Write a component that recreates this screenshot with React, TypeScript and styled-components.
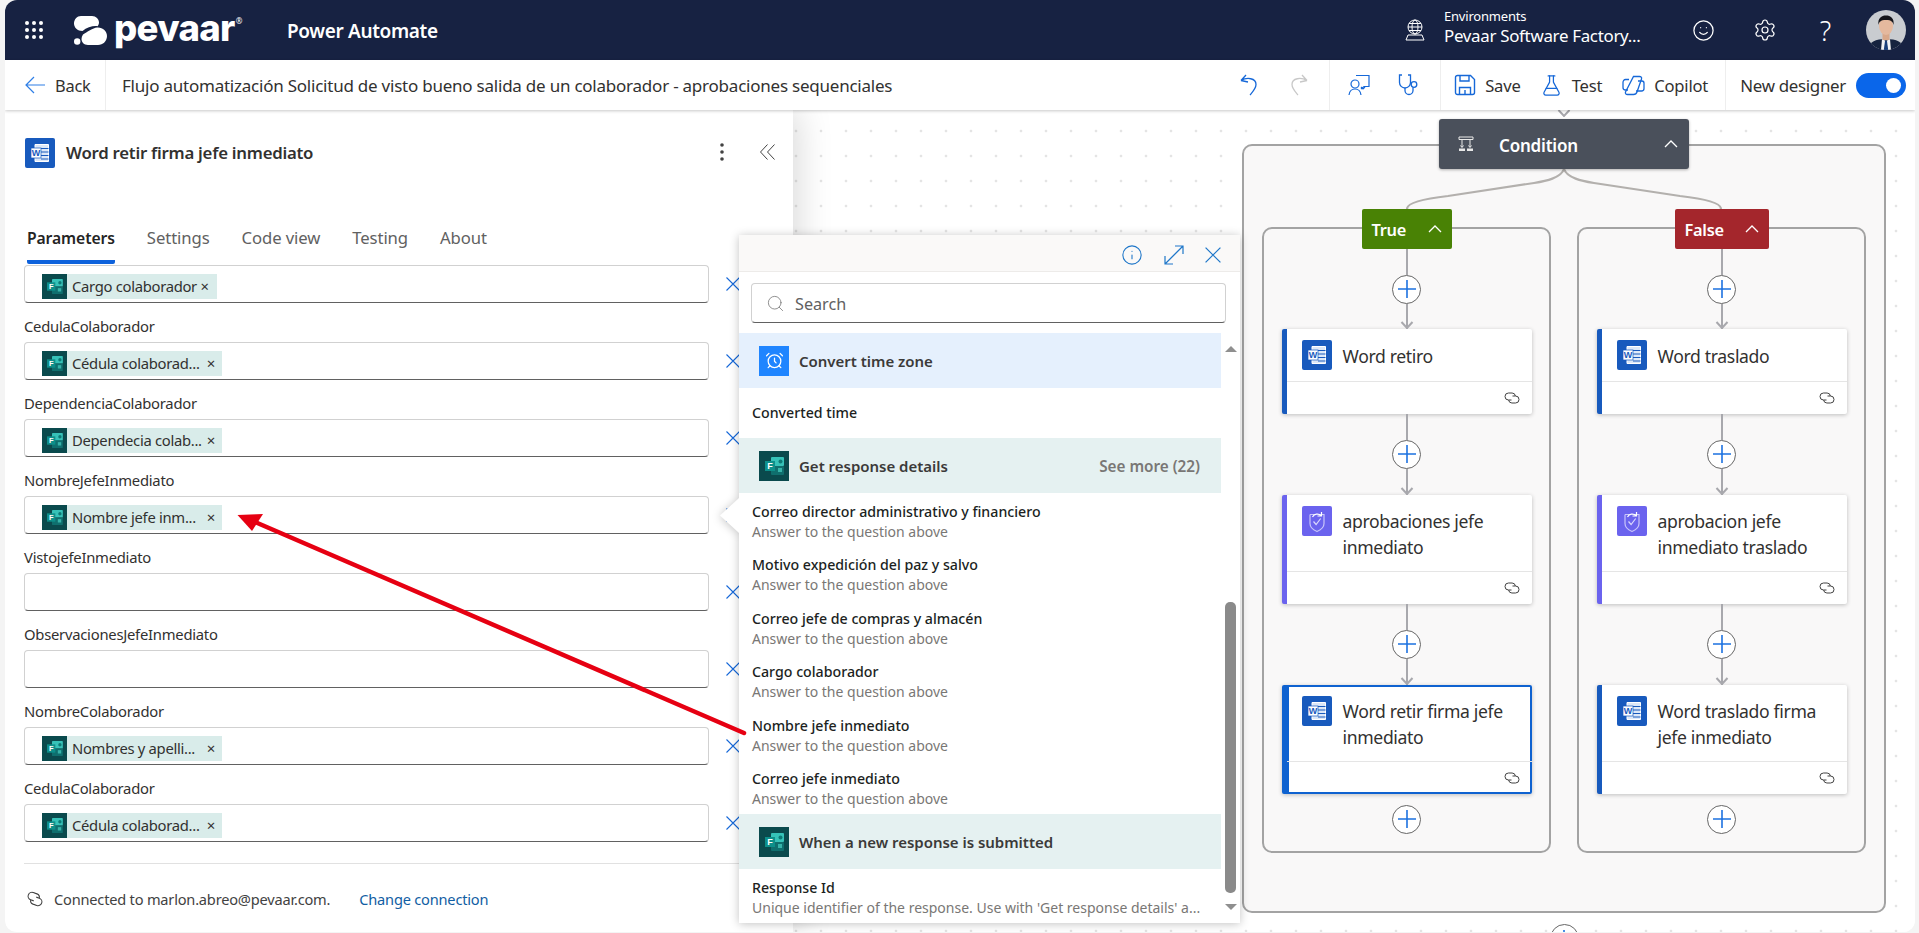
import React from "react";
import styled, { createGlobalStyle } from "styled-components";
import { AlarmClock, FlaskConical, Info, Search, Settings, Smile } from "lucide-react";

const FONT = `"Noto Sans", "Open Sans", Roboto, sans-serif`;
const BLUE = "#1668d8";
const TEXT = "#323130";

const Global = createGlobalStyle`
  html, body { margin: 0; padding: 0; background: #f4f4f4; overflow: hidden; }
  * { box-sizing: border-box; }
  #root { width: 1919px; height: 933px; }
`;

const Window = styled.div`
  position: relative;
  margin-left: 5px;
  width: 1910px;
  height: 932px;
  border-radius: 12px;
  overflow: hidden;
  display: flex;
  flex-direction: column;
  background: #fff;
  font-family: ${FONT};
  color: ${TEXT};
`;

/* ---------- top bar ---------- */
const Header = styled.header`
  height: 60px;
  flex: none;
  background: #172242;
  color: #fff;
  display: flex;
  align-items: center;
`;
const Waffle = styled.div`
  display: grid;
  grid-template-columns: repeat(3, 4px);
  grid-auto-rows: 4px;
  gap: 3px;
  margin-left: 20px;
  i { background: #fff; border-radius: 50%; }
`;
const Logo = styled.div`
  display: flex;
  align-items: center;
  margin-left: 31px;
  width: 170px;
`;
const LogoWord = styled.span`
  font-family: Inter, ${FONT};
  font-weight: 800;
  font-size: 36.5px;
  line-height: 42px;
  letter-spacing: -0.7px;
  margin-left: 7px;
  margin-top: -4px;
`;
const LogoMark = styled.sup`
  font-size: 8px;
  line-height: 8px;
  margin-top: -18px;
  margin-left: 1px;
`;
const AppName = styled.div`
  margin-left: 43px;
  margin-top: 2px;
  font-size: 19px;
  font-weight: 600;
  letter-spacing: -0.35px;
`;
const HeaderRight = styled.div`
  margin-left: auto;
  display: flex;
  align-items: center;
  height: 100%;
`;
const EnvBlock = styled.div`
  margin-left: 18px;
  width: 229px;
  display: flex;
  flex-direction: column;
`;
const EnvLabel = styled.span`
  font-size: 13px;
  line-height: 16px;
  margin-top: -5px;
  letter-spacing: -0.2px;
`;
const EnvName = styled.span`
  font-size: 16.9px;
  line-height: 22px;
  margin-top: 1px;
  letter-spacing: -0.3px;
`;
const HeaderIcon = styled.span`
  width: 61px;
  display: flex;
  justify-content: center;
  align-items: center;
  font-size: 27px;
  font-weight: 300;
`;
const Avatar = styled.div`
  width: 40px;
  height: 40px;
  border-radius: 50%;
  overflow: hidden;
  margin: 0 9px 0 10px;
  svg { display: block; }
`;

/* ---------- toolbar ---------- */
const Toolbar = styled.div`
  height: 50px;
  flex: none;
  background: #fff;
  display: flex;
  align-items: center;
  box-shadow: 0 1px 3px rgba(0, 0, 0, 0.22);
  position: relative;
  z-index: 5;
`;
const BackBtn = styled.div`
  width: 101px;
  height: 100%;
  border-right: 1px solid #eeeeee;
  display: flex;
  align-items: center;
  gap: 10px;
  padding-left: 20px;
  font-size: 16.4px;
  letter-spacing: -0.2px;
`;
const FlowTitle = styled.div`
  flex: 1;
  padding-left: 16px;
  font-size: 17px;
  letter-spacing: -0.23px;
  white-space: nowrap;
`;
const ToolGroup = styled.div<{ $w?: number; $gap?: number; $pad?: string; $ml?: number }>`
  height: 100%;
  display: flex;
  align-items: center;
  ${(p) => (p.$w ? `width: ${p.$w}px;` : "")}
  gap: ${(p) => p.$gap ?? 0}px;
  padding: ${(p) => p.$pad ?? "0"};
  margin-left: ${(p) => p.$ml ?? 0}px;
  border-left: 1px solid #eeeeee;
`;
const PlainGroup = styled(ToolGroup)`
  border-left: none;
`;
const IconBtn = styled.span`
  width: 50px;
  display: flex;
  justify-content: center;
`;
const Action = styled.span<{ $ml?: number }>`
  display: flex;
  align-items: center;
  gap: 9px;
  font-size: 16.6px;
  letter-spacing: -0.2px;
  margin-left: ${(p) => p.$ml ?? 0}px;
`;
const DesignerLabel = styled.span`
  font-size: 16.9px;
  letter-spacing: -0.3px;
  white-space: nowrap;
`;
const Toggle = styled.span`
  width: 50px;
  height: 25px;
  border-radius: 13px;
  background: #0a66ea;
  display: flex;
  justify-content: flex-end;
  align-items: center;
  padding-right: 5px;
  i { width: 15px; height: 15px; border-radius: 50%; background: #fff; }
`;
const GroupSpacer = styled.span`
  width: 6px;
`;

/* ---------- body ---------- */
const Body = styled.div`
  flex: 1;
  display: flex;
  min-height: 0;
`;
const Panel = styled.aside`
  width: 788px;
  flex: none;
  background: #fff;
  box-shadow: 4px 0 34px rgba(0, 0, 0, 0.16);
  padding-left: 19px;
  position: relative;
  z-index: 2;
  overflow: hidden;
`;
const PanelHead = styled.div`
  height: 105px;
  padding: 28px 0 0 1px;
  display: flex;
  align-items: flex-start;
`;
const PanelTitle = styled.div`
  margin-left: 11px;
  margin-top: 3px;
  font-size: 16.8px;
  line-height: 24px;
  font-weight: 600;
  letter-spacing: -0.25px;
  flex: 1;
`;
const PanelTools = styled.div`
  display: flex;
  align-items: center;
  gap: 36px;
  margin: 5px 18px 0 0;
`;
const Tabs = styled.div`
  height: 50px;
  display: flex;
  gap: 32px;
  padding-left: 3px;
`;
const Tab = styled.div<{ $on?: boolean }>`
  height: 49px;
  padding-top: 13px;
  font-size: ${(p) => (p.$on ? 15.7 : 16.7)}px;
  line-height: 20px;
  letter-spacing: -0.1px;
  color: ${(p) => (p.$on ? "#242424" : "#616161")};
  font-weight: ${(p) => (p.$on ? 600 : 400)};
  border-bottom: 4px solid ${(p) => (p.$on ? "#0e62dc" : "transparent")};
  border-radius: 0 0 2px 2px;
`;
const Label = styled.div`
  height: 39px;
  padding-top: 13px;
  font-size: 14.8px;
  line-height: 20px;
  letter-spacing: -0.25px;
`;
const FieldRow = styled.div`
  display: flex;
  align-items: center;
  gap: 17px;
`;
const Input = styled.div`
  width: 685px;
  height: 38px;
  border: 1px solid #d1d1d1;
  border-bottom-color: #616161;
  border-radius: 4px;
  background: #fff;
  padding: 8px 0 0 17px;
`;
const Token = styled.span<{ $w: number }>`
  width: ${(p) => p.$w}px;
  height: 25px;
  display: flex;
  align-items: center;
  background: #d9ecea;
  font-size: 14.8px;
  letter-spacing: -0.3px;
  white-space: nowrap;
  position: relative;
`;
const TokenText = styled.span`
  margin: -2px 0 0 5px;
`;
const TokenClose = styled.span`
  position: absolute;
  right: 7px;
  top: 3px;
  font-size: 15px;
  line-height: 18px;
`;
const Divider = styled.div`
  width: 720px;
  height: 1px;
  background: #e1e1e1;
  margin-top: 21px;
`;
const Connection = styled.div`
  margin-top: 25px;
  display: flex;
  align-items: center;
  font-size: 14.6px;
  line-height: 20px;
  letter-spacing: -0.2px;
  padding-left: 3px;
`;
const ConnIcon = styled.span`
  display: block;
  line-height: 0;
  transform: rotate(20deg) scale(1.1);
`;
const ConnText = styled.span`
  margin-left: 11px;
  color: #424242;
`;
const ConnLink = styled.span`
  margin-left: 29px;
  color: #115ea3;
`;

/* ---------- canvas ---------- */
const Canvas = styled.main`
  flex: 1;
  position: relative;
  overflow: hidden;
  background-color: #fff;
  background-image: radial-gradient(circle, #bdbdbd 0.8px, transparent 1.1px);
  background-size: 25px 25px;
  background-position: -9.5px 8.5px;
`;
const FlowWrap = styled.div`
  position: absolute;
  left: 449px;
  top: 34px;
  width: 644px;
  display: flex;
  flex-direction: column;
  align-items: center;
`;
const Group = styled.section`
  width: 644px;
  height: 769px;
  border: 2px solid #a3a3a3;
  border-radius: 10px;
  background: #f9f8f8;
  display: flex;
  flex-direction: column;
  align-items: center;
`;
const ConditionNode = styled.div`
  width: 250px;
  height: 50px;
  flex: none;
  margin-top: -27px;
  background: #4a505b;
  color: #fff;
  border-radius: 3px;
  box-shadow: 0 1px 3px rgba(0, 0, 0, 0.3);
  display: flex;
  align-items: center;
  padding: 0 11px 0 19px;
  font-size: 17px;
  font-weight: 600;
  position: relative;
`;
const ConditionName = styled.span`
  margin: 2px 0 0 25px;
  flex: 1;
  letter-spacing: -0.2px;
`;
const TopArrow = styled.span`
  position: absolute;
  left: 118px;
  top: -10px;
  line-height: 0;
`;
const BranchLinks = styled.svg`
  flex: none;
  display: block;
`;
const Branches = styled.div`
  display: flex;
  gap: 26px;
  padding-top: 18px;
`;
const Branch = styled.div`
  width: 289px;
  height: 626px;
  border: 2px solid #a3a3a3;
  border-radius: 10px;
  display: flex;
  flex-direction: column;
  align-items: center;
`;
const BranchHead = styled.div<{ $bg: string; $w: number }>`
  width: ${(p) => p.$w}px;
  height: 40px;
  flex: none;
  margin-top: -20px;
  background: ${(p) => p.$bg};
  color: #fff;
  border-radius: 2px;
  display: flex;
  align-items: center;
  justify-content: space-between;
  padding: 0 10px;
  font-size: 16.4px;
  font-weight: 600;
  letter-spacing: -0.3px;
`;
const Edge = styled.div<{ $h: number }>`
  height: ${(p) => p.$h}px;
  flex: none;
  display: flex;
  flex-direction: column;
  align-items: center;
`;
const EdgeLine = styled.div`
  flex: 1;
  width: 2px;
  background: #a8a8ad;
  position: relative;
`;
const ArrowHead = styled.span`
  position: absolute;
  left: -6px;
  bottom: 0;
  line-height: 0;
`;
const PlusBtn = styled.span`
  width: 29px;
  height: 29px;
  flex: none;
  border-radius: 50%;
  background: #fff;
  border: 1px solid #666;
  display: flex;
  align-items: center;
  justify-content: center;
`;
const Card = styled.article<{ $accent: string; $selected?: boolean }>`
  width: 250px;
  flex: none;
  background: #fff;
  border-radius: 2px;
  box-shadow: ${(p) => (p.$selected ? "inset 0 0 0 2px #0f62d0, " : "")}0 1px 4px rgba(0, 0, 0, 0.24);
  border-left: 5px solid ${(p) => (p.$selected ? "#0f62d0" : p.$accent)};
`;
const CardHead = styled.div`
  display: flex;
  gap: 11px;
  padding: 11px 15px 10.5px 15px;
  border-bottom: 1px solid #e5e5e5;
`;
const CardTitle = styled.div`
  padding-top: 3.5px;
  font-size: 17.6px;
  line-height: 25.5px;
  letter-spacing: -0.35px;
  color: #323130;
`;
const CardFoot = styled.div`
  height: 32px;
  display: flex;
  align-items: center;
  justify-content: flex-end;
  padding-right: 12px;
`;
const TailPlus = styled(PlusBtn)`
  margin-top: 11px;
`;

/* ---------- picker ---------- */
const Popup = styled.div`
  position: absolute;
  left: 734px;
  top: 235px;
  width: 501px;
  height: 688px;
  background: #fff;
  filter: drop-shadow(0 1px 5px rgba(0, 0, 0, 0.24));
  display: flex;
  flex-direction: column;
  z-index: 8;
  &::before {
    content: "";
    position: absolute;
    left: -19px;
    top: 263px;
    width: 19px;
    height: 35px;
    background: #fff;
    clip-path: polygon(100% 0, 0 50%, 100% 100%);
  }
`;
const PopHead = styled.div`
  height: 37px;
  flex: none;
  background: #faf9f8;
  border-bottom: 1px solid #edebe9;
  display: flex;
  align-items: center;
  justify-content: flex-end;
  gap: 21px;
  padding-right: 19px;
  padding-top: 3px;
`;
const SearchWrap = styled.div`
  padding: 11px 14px 10px 12px;
  flex: none;
`;
const SearchBox = styled.div`
  height: 40px;
  border: 1px solid #d1d1d1;
  border-bottom-color: #616161;
  border-radius: 4px;
  display: flex;
  align-items: center;
  padding: 1px 0 0 14px;
  gap: 10px;
  color: #616161;
  font-size: 16.2px;
`;
const PopBody = styled.div`
  flex: 1;
  display: flex;
  min-height: 0;
`;
const List = styled.div`
  width: 482px;
  flex: none;
`;
const SectionHead = styled.div<{ $bg: string }>`
  height: 55px;
  background: ${(p) => p.$bg};
  display: flex;
  align-items: center;
  padding: 0 21px 0 20px;
  gap: 10px;
  font-size: 15px;
  font-weight: 600;
  color: #3b3a39;
  letter-spacing: -0.02px;
`;
const SeeMore = styled.span`
  margin-left: auto;
  font-weight: 600;
  font-size: 15.3px;
  color: #797775;
`;
const TimeBadge = styled.span`
  width: 30px;
  height: 30px;
  background: #1f85ff;
  display: flex;
  align-items: center;
  justify-content: center;
  color: #fff;
`;
const SimpleRow = styled.div`
  height: 50px;
  display: flex;
  align-items: center;
  padding: 0 0 2px 13px;
  font-size: 14.2px;
  font-weight: 500;
  color: #201f1e;
`;
const TokenRow = styled.div`
  height: 53.5px;
  padding: 8.5px 0 5px 13px;
`;
const RowTitle = styled.div`
  font-size: 14.2px;
  line-height: 20px;
  font-weight: 500;
  color: #201f1e;
  letter-spacing: 0;
  white-space: nowrap;
`;
const RowSub = styled.div`
  font-size: 14px;
  line-height: 20px;
  color: #797775;
  letter-spacing: 0;
  white-space: nowrap;
`;
const Scrollbar = styled.div`
  width: 19px;
  flex: none;
  padding-top: 13px;
  display: flex;
  flex-direction: column;
  align-items: center;
`;
const ScrollUp = styled.i`
  width: 0;
  height: 0;
  border-left: 6px solid transparent;
  border-right: 6px solid transparent;
  border-bottom: 6px solid #8f8f8f;
`;
const ScrollDown = styled.i`
  width: 0;
  height: 0;
  border-left: 6px solid transparent;
  border-right: 6px solid transparent;
  border-top: 6px solid #8f8f8f;
  margin-top: 11px;
`;
const Thumb = styled.div`
  width: 11px;
  height: 291px;
  margin-top: 250px;
  border-radius: 5px;
  background: #8a8a8a;
`;
const Annotation = styled.svg`
  position: absolute;
  left: 0;
  top: 0;
  z-index: 9;
  pointer-events: none;
`;
const Tile = styled.svg`
  flex: none;
  display: block;
`;

/* ---------- drawings ---------- */
const WordIcon = () => (
  <Tile width="30" height="30" viewBox="0 0 30 30">
    <rect width="30" height="30" rx="2" fill="#185abd" />
    <path d="M10 6.500h13.500v17H10z" fill="#dce8f8" stroke="#fff" />
    <path d="M16 10.500h7.500M16 14h7.500M16 17.500h7.500M16 21h7.500" stroke="#185abd" strokeWidth="1" />
    <rect x="6" y="10" width="10" height="10" fill="#fff" stroke="#185abd" strokeWidth=".7" />
    <text x="11" y="18.200" fontSize="9" fontWeight="700" fontFamily="Liberation Sans" textAnchor="middle" fill="#185abd">W</text>
  </Tile>
);
const FormsIcon = ({ size = 30 }: { size?: number }) => (
  <Tile width={size} height={size} viewBox="0 0 30 30">
    <rect width="30" height="30" fill="#0a4a4d" />
    <rect x="12" y="6" width="13" height="9" rx="1" fill="#36c2b8" />
    <circle cx="21.500" cy="10.500" r="2" fill="#0c7a75" />
    <rect x="12" y="15" width="13" height="9" rx="1" fill="#0f6f6e" />
    <rect x="19" y="17" width="4" height="4" fill="#37b3a9" />
    <rect x="6" y="10" width="10" height="10" fill="#0d8f8a" />
    <text x="11" y="18.200" fontSize="9" fontWeight="700" fontFamily="Liberation Sans" textAnchor="middle" fill="#fff">F</text>
  </Tile>
);
const ApprovalIcon = () => (
  <Tile width="30" height="30" viewBox="0 0 30 30">
    <rect width="30" height="30" rx="2" fill="#6b63ee" />
    <path d="M8 8.500h5M17 8.500h5v9c0 4-3.500 6.500-7 8-3.500-1.500-7-4-7-8v-9" fill="none" stroke="#c8c5fa" strokeWidth="1.200" />
    <path d="M11.500 15.500l2.600 3 4.600-6" fill="none" stroke="#d9d7fc" strokeWidth="1.200" />
    <path d="M10.500 11a5.500 5.500 0 0 1 8.500-1.500M19.500 6v4h-4" fill="none" stroke="#fff" strokeWidth="1.200" />
  </Tile>
);
const LinkIcon = ({ c = "#424242" }: { c?: string }) => (
  <Tile width="16" height="12" viewBox="0 0 16 12" fill="none" stroke={c} strokeWidth="1">
    <path d="M7.500 8H4.500a3.400 3.400 0 0 1 0-7h3.600a3.400 3.400 0 0 1 3.300 3" />
    <path d="M8.500 4h3a3.400 3.400 0 0 1 0 7H7.900a3.400 3.400 0 0 1-3.300-3" />
  </Tile>
);
const PlusGlyph = () => (
  <svg width="18" height="18" viewBox="0 0 18 18" stroke="#1d72e0" strokeWidth="1.600">
    <path d="M9 0v18M0 9h18" />
  </svg>
);
const XGlyph = ({ size = 14, c = BLUE }: { size?: number; c?: string }) => (
  <Tile width={size} height={size} viewBox="0 0 14 14" stroke={c} strokeWidth="1.100" fill="none">
    <path d="M.5.5l13 13M13.500.5l-13 13" />
  </Tile>
);
const Chevron = ({ c = "#fff" }: { c?: string }) => (
  <Tile width="14" height="8" viewBox="0 0 14 8" fill="none" stroke={c} strokeWidth="1.300">
    <path d="M1 7l6-6 6 6" />
  </Tile>
);
const Arrow = ({ c = "#a8a8ad" }: { c?: string }) => (
  <Tile width="14" height="8" viewBox="0 0 14 8" fill="none" stroke={c} strokeWidth="2">
    <path d="M1.500 1l5.500 6 5.500-6" />
  </Tile>
);

const FlowEdge = ({ h }: { h: number }) => (
  <Edge $h={h}>
    <EdgeLine />
    <PlusBtn>
      <PlusGlyph />
    </PlusBtn>
    <EdgeLine>
      <ArrowHead>
        <Arrow />
      </ArrowHead>
    </EdgeLine>
  </Edge>
);

const FlowCard = ({
  icon,
  accent,
  selected,
  lines,
}: {
  icon: React.ReactNode;
  accent: string;
  selected?: boolean;
  lines: string[];
}) => (
  <Card $accent={accent} $selected={selected}>
    <CardHead>
      {icon}
      <CardTitle>
        {lines.map((l) => (
          <div key={l}>{l}</div>
        ))}
      </CardTitle>
    </CardHead>
    <CardFoot>
      <LinkIcon />
    </CardFoot>
  </Card>
);

const FieldLine = ({ label, token }: { label?: string; token?: string }) => (
  <>
    {label && <Label>{label}</Label>}
    <FieldRow>
      <Input>
        {token && (
          <Token $w={180}>
            <FormsIcon size={25} />
            <TokenText>{token}</TokenText>
            <TokenClose>×</TokenClose>
          </Token>
        )}
      </Input>
      <XGlyph />
    </FieldRow>
  </>
);

const ANSWERS = [
  "Correo director administrativo y financiero",
  "Motivo expedición del paz y salvo",
  "Correo jefe de compras y almacén",
  "Cargo colaborador",
  "Nombre jefe inmediato",
  "Correo jefe inmediato",
];

export default function App() {
  return (
    <>
      <Global />
      <Window>
        <Header>
          <Waffle>
            {Array.from({ length: 9 }).map((_, i) => (
              <i key={i} />
            ))}
          </Waffle>
          <Logo>
            <svg width="33" height="29" viewBox="0 0 33 29" fill="#fff" style={{ flex: "none" }}>
              <path d="M7 0h11c4 0 7 3 7 6.500 0 1.500-.6 2.800-1.500 3.800C20 9.500 13 11 8.500 15 3.500 15 0 11.500 0 7.500 0 3.500 3 0 7 0z" />
              <path d="M23 11.500c5.500-.5 10 3.500 10 8.500s-4 9-9 9H14c-4 0-6.500-3-6.500-6 0-1.500.5-3 1.500-4.500 4-2.500 10-6.500 14-7z" />
              <circle cx="3.200" cy="25.500" r="3.200" />
            </svg>
            <LogoWord>pevaar</LogoWord>
            <LogoMark>®</LogoMark>
          </Logo>
          <AppName>Power Automate</AppName>
          <HeaderRight>
            <svg width="22" height="22" viewBox="0 0 22 22" fill="none" stroke="#fff" strokeWidth="1">
              <circle cx="11" cy="8" r="7" />
              <ellipse cx="11" cy="8" rx="3" ry="7" />
              <path d="M4 8h14M5 4.500h12M5 11.500h12M2 21h18l-2-5H4z" />
            </svg>
            <EnvBlock>
              <EnvLabel>Environments</EnvLabel>
              <EnvName>Pevaar Software Factory...</EnvName>
            </EnvBlock>
            <HeaderIcon>
              <Smile size={23} strokeWidth={1.3} />
            </HeaderIcon>
            <HeaderIcon>
              <Settings size={24} strokeWidth={1.2} />
            </HeaderIcon>
            <HeaderIcon>?</HeaderIcon>
            <Avatar>
              <svg width="40" height="40" viewBox="0 0 40 40">
                <rect width="40" height="40" fill="#c9ccd0" />
                <path d="M2 40c0-8 8-11 18-11s18 3 18 11z" fill="#16233f" />
                <path d="M16 29l4 2 4-2 1 11h-10z" fill="#f3f3f3" />
                <path d="M19 31h2l1.200 9h-4.400z" fill="#1a3f7a" />
                <rect x="16.500" y="21" width="7" height="9" fill="#d9a88a" />
                <ellipse cx="20" cy="16" rx="7" ry="9" fill="#e5b99e" />
                <path d="M12.500 15c-1-7 3-9.500 7.500-9.500s8.500 2.500 7.500 9.500c-.5-3-2-5-7.500-5s-7 2-7.500 5z" fill="#15151a" />
              </svg>
            </Avatar>
          </HeaderRight>
        </Header>

        <Toolbar>
          <BackBtn>
            <svg width="20" height="18" viewBox="0 0 20 18" fill="none" stroke="#2f7fe6" strokeWidth="1.200">
              <path d="M20 9H1M9 1L1 9l8 8" />
            </svg>
            Back
          </BackBtn>
          <FlowTitle>Flujo automatización Solicitud de visto bueno salida de un colaborador - aprobaciones sequenciales</FlowTitle>
          <PlainGroup>
            <IconBtn>
              <svg width="18" height="22" viewBox="0 0 18 22" fill="none" stroke={BLUE} strokeWidth="1.300">
                <path d="M1 6.500L6 1M1 6.500l7 1.500M1 6.500C7 3 16 4 16 10.500c0 4-3.500 7.500-6 10.500" />
              </svg>
            </IconBtn>
            <IconBtn>
              <svg width="18" height="22" viewBox="0 0 18 22" fill="none" stroke="#c8c8c8" strokeWidth="1.300">
                <path d="M17 6.500L12 1M17 6.500l-7 1.500M17 6.500C11 3 2 4 2 10.500c0 4 3.500 7.500 6 10.500" />
              </svg>
            </IconBtn>
          </PlainGroup>
          <ToolGroup $pad="0 0 0 4px" $ml={5}>
            <IconBtn>
              <svg width="22" height="22" viewBox="0 0 22 22" fill="none" stroke={BLUE} strokeWidth="1.200">
                <path d="M8 1.500h13v11h-5l-3 2.500" />
                <circle cx="7" cy="10" r="4" />
                <path d="M1 21c.5-4 2.500-6 6-6s5.500 2 6 6" />
                <path d="M13 13l2 2 2-2" />
              </svg>
            </IconBtn>
            <IconBtn>
              <svg width="22" height="22" viewBox="0 0 22 22" fill="none" stroke={BLUE} strokeWidth="1.300">
                <path d="M4 1H1.500v7.500a5.500 5.500 0 0 0 11 0V1H10" />
                <path d="M7 14v2.500a4 4 0 0 0 8 0v-3" />
                <circle cx="16" cy="10.500" r="2.800" />
              </svg>
            </IconBtn>
            <GroupSpacer />
          </ToolGroup>
          <ToolGroup $w={285} $pad="0 0 0 13px">
            <Action>
              <svg width="22" height="22" viewBox="0 0 22 22" fill="none" stroke={BLUE} strokeWidth="1.400">
                <path d="M1.500 3.500a2 2 0 0 1 2-2h13l4 4v13a2 2 0 0 1-2 2h-15a2 2 0 0 1-2-2z" />
                <path d="M6 1.500v5.500h9V1.500M5.500 20.500v-7h11v7M11 16v4.500" />
              </svg>
              Save
            </Action>
            <Action $ml={19}>
              <FlaskConical size={23} strokeWidth={1.3} color={BLUE} />
              Test
            </Action>
            <Action $ml={20}>
              <svg width="23" height="23" viewBox="0 0 23 23" fill="none" stroke={BLUE} strokeWidth="1.300">
                <path d="M9.500 2.500h6c1.500 0 2.500 1 2 2.500L13 18c-.5 1.500-2 2.500-3.500 2.500h-6C2 20.500 1 19.500 1.500 18z" transform="translate(2 0)" />
                <path d="M7 5.500H3.500C2 5.500 1 7 1 8.500v5C1 15 2 16 3.500 16H6M16 7h4c1.200 0 2 1 2 2.200v5.300c0 1.500-1 2.500-2.500 2.500H14" />
              </svg>
              Copilot
            </Action>
          </ToolGroup>
          <ToolGroup $gap={10} $pad="0 9px 0 14px">
            <DesignerLabel>New designer</DesignerLabel>
            <Toggle>
              <i />
            </Toggle>
          </ToolGroup>
        </Toolbar>

        <Body>
          <Panel>
            <PanelHead>
              <WordIcon />
              <PanelTitle>Word retir firma jefe inmediato</PanelTitle>
              <PanelTools>
                <svg width="4" height="18" viewBox="0 0 4 18" fill="#424242">
                  <circle cx="2" cy="2" r="1.800" />
                  <circle cx="2" cy="9" r="1.800" />
                  <circle cx="2" cy="16" r="1.800" />
                </svg>
                <svg width="15" height="16" viewBox="0 0 15 16" fill="none" stroke="#424242" strokeWidth="1">
                  <path d="M7.500.5l-7 7.500 7 7.500M14.500.5l-7 7.500 7 7.500" />
                </svg>
              </PanelTools>
            </PanelHead>
            <Tabs>
              <Tab $on>Parameters</Tab>
              <Tab>Settings</Tab>
              <Tab>Code view</Tab>
              <Tab>Testing</Tab>
              <Tab>About</Tab>
            </Tabs>
            <FieldRow>
              <Input>
                <Token $w={175}>
                  <FormsIcon size={25} />
                  <TokenText>Cargo colaborador ×</TokenText>
                </Token>
              </Input>
              <XGlyph />
            </FieldRow>
            <FieldLine label="CedulaColaborador" token="Cédula colaborad..." />
            <FieldLine label="DependenciaColaborador" token="Dependecia colab..." />
            <FieldLine label="NombreJefeInmediato" token="Nombre jefe inm..." />
            <FieldLine label="VistojefeInmediato" />
            <FieldLine label="ObservacionesJefeInmediato" />
            <FieldLine label="NombreColaborador" token="Nombres y apelli..." />
            <FieldLine label="CedulaColaborador" token="Cédula colaborad..." />
            <Divider />
            <Connection>
              <ConnIcon>
                <LinkIcon />
              </ConnIcon>
              <ConnText>Connected to marlon.abreo@pevaar.com.</ConnText>
              <ConnLink>Change connection</ConnLink>
            </Connection>
          </Panel>

          <Canvas>
            <FlowWrap>
              <Group>
                <ConditionNode>
                  <TopArrow>
                    <Arrow />
                  </TopArrow>
                  <Tile width="16" height="16" viewBox="0 0 16 16" fill="none" stroke="#e8e8e8" strokeWidth="1">
                    <path d="M1 1h14v2.500H1zM4 3.500V11M12 3.500V11M2.500 9.500L4 11.500l1.500-2M10.500 9.500l1.500 2 1.500-2" />
                    <path d="M1 12.500h6V15H1zM9 12.500h6V15H9z" fill="#e8e8e8" stroke="none" />
                  </Tile>
                  <ConditionName>Condition</ConditionName>
                  <Chevron />
                </ConditionNode>
                <BranchLinks width="316" height="40" viewBox="0 0 316 40" fill="none" stroke="#b3b0ad" strokeWidth="2.200">
                  <path d="M158 0C155 9 140 12 128 14L42 27C15 30 1 34 1 40" />
                  <path d="M158 0C161 9 176 12 188 14L274 27C301 30 315 34 315 40" />
                </BranchLinks>
                <Branches>
                  <Branch>
                    <BranchHead $bg="#498205" $w={90}>
                      True
                      <Chevron />
                    </BranchHead>
                    <FlowEdge h={80} />
                    <FlowCard icon={<WordIcon />} accent="#185abd" lines={["Word retiro"]} />
                    <FlowEdge h={81} />
                    <FlowCard icon={<ApprovalIcon />} accent="#6b63ee" lines={["aprobaciones jefe", "inmediato"]} />
                    <FlowEdge h={81} />
                    <FlowCard icon={<WordIcon />} accent="#185abd" selected lines={["Word retir firma jefe", "inmediato"]} />
                    <TailPlus>
                      <PlusGlyph />
                    </TailPlus>
                  </Branch>
                  <Branch>
                    <BranchHead $bg="#a4262c" $w={94}>
                      False
                      <Chevron />
                    </BranchHead>
                    <FlowEdge h={80} />
                    <FlowCard icon={<WordIcon />} accent="#185abd" lines={["Word traslado"]} />
                    <FlowEdge h={81} />
                    <FlowCard icon={<ApprovalIcon />} accent="#6b63ee" lines={["aprobacion jefe", "inmediato traslado"]} />
                    <FlowEdge h={81} />
                    <FlowCard icon={<WordIcon />} accent="#185abd" lines={["Word traslado firma", "jefe inmediato"]} />
                    <TailPlus>
                      <PlusGlyph />
                    </TailPlus>
                  </Branch>
                </Branches>
              </Group>
              <TailPlus>
                <PlusGlyph />
              </TailPlus>
            </FlowWrap>
          </Canvas>
        </Body>

        <Popup>
          <PopHead>
            <Info size={22} strokeWidth={1.2} color="#1f77c9" />
            <svg width="20" height="20" viewBox="0 0 20 20" fill="none" stroke="#1f77c9" strokeWidth="1.200">
              <path d="M1 19L19 1M11 1h8v8M1 11v8h8" />
            </svg>
            <XGlyph size={16} c="#1f77c9" />
          </PopHead>
          <SearchWrap>
            <SearchBox>
              <Search size={19} strokeWidth={1} color="#757575" />
              Search
            </SearchBox>
          </SearchWrap>
          <PopBody>
            <List>
              <SectionHead $bg="#e5f0fd">
                <TimeBadge>
                  <AlarmClock size={19} strokeWidth={1.6} />
                </TimeBadge>
                Convert time zone
              </SectionHead>
              <SimpleRow>Converted time</SimpleRow>
              <SectionHead $bg="#e5f1f1">
                <FormsIcon />
                Get response details
                <SeeMore>See more (22)</SeeMore>
              </SectionHead>
              {ANSWERS.map((t) => (
                <TokenRow key={t}>
                  <RowTitle>{t}</RowTitle>
                  <RowSub>Answer to the question above</RowSub>
                </TokenRow>
              ))}
              <SectionHead $bg="#e5f1f1">
                <FormsIcon />
                When a new response is submitted
              </SectionHead>
              <TokenRow>
                <RowTitle>Response Id</RowTitle>
                <RowSub>Unique identifier of the response. Use with 'Get response details' a...</RowSub>
              </TokenRow>
            </List>
            <Scrollbar>
              <ScrollUp />
              <Thumb />
              <ScrollDown />
            </Scrollbar>
          </PopBody>
        </Popup>

        <Annotation width="760" height="760" viewBox="0 0 760 760">
          <path d="M739 733L250 522" stroke="#e60012" strokeWidth="4.500" strokeLinecap="round" />
          <path d="M232.500 515L258 514 247 531z" fill="#e60012" />
        </Annotation>
      </Window>
    </>
  );
}
